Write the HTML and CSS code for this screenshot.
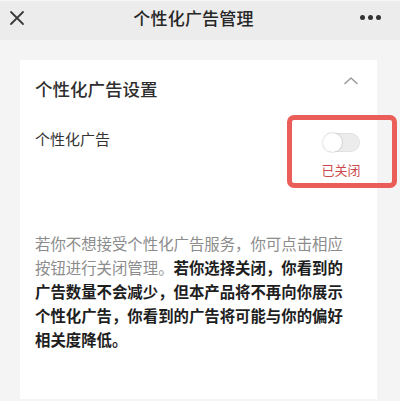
FILE: index.html
```html
<!DOCTYPE html>
<html lang="zh-CN">
<head>
<meta charset="utf-8">
<title>个性化广告管理</title>
<link rel="stylesheet" href="styles.css">
</head>
<body>
<header class="topbar">
  <svg class="close-icon" width="16" height="16" viewBox="0 0 16 16" aria-hidden="true">
    <path d="M2 2 L14 14 M14 2 L2 14" stroke="#3a3a3a" stroke-width="1.8" stroke-linecap="round" fill="none"/>
  </svg>
  <h1 class="topbar-title">个性化广告管理</h1>
  <div class="more-icon" aria-hidden="true"><span></span><span></span><span></span></div>
</header>
<main class="page">
  <section class="card">
    <div class="card-head">
      <h2 class="card-title">个性化广告设置</h2>
      <svg class="chevron" width="16" height="9" viewBox="0 0 16 9" aria-hidden="true">
        <path d="M2 7.5 L8 2 L14 7.5" stroke="#9a9a9a" stroke-width="1.5" fill="none" stroke-linecap="round" stroke-linejoin="round"/>
      </svg>
    </div>
    <div class="row">
      <span class="row-label">个性化广告</span>
      <div class="switch-group">
        <div class="switch"><span class="knob"></span></div>
        <span class="switch-state">已关闭</span>
        <span class="highlight"></span>
      </div>
    </div>
    <p class="desc"><span class="muted">若你不想接受个性化广告服务，你可点击相应</span><span class="muted">按钮进行关闭管理。</span><strong>若你选择关闭，你看到的</strong><strong>广告数量不会减少，但本产品将不再向你展示个性化广告，你看到的广告将可能与你的偏好相关度降低。</strong></p>
  </section>
</main>
</body>
</html>
```

FILE: styles.css
```css
html, body {
  margin: 0;
  padding: 0;
}
body {
  width: 400px;
  height: 401px;
  overflow: hidden;
  background: #f4f4f4;
  font-family: "Noto Sans CJK SC", "Noto Sans", sans-serif;
  color: #333;
}
.topbar {
  box-sizing: border-box;
  height: 40px;
  border-top: 1px solid #f7f7f7;
  background: #ececec;
  display: flex;
  align-items: center;
  padding: 0 19px 6px 9px;
}
.close-icon {
  flex: none;
}
.topbar-title {
  flex: 1;
  margin: 0;
  text-align: center;
  font-size: 17px;
  line-height: 24px;
  font-weight: 500;
  color: #262626;
  letter-spacing: 0.2px;
  padding-left: 2px;
}
.more-icon {
  display: flex;
  gap: 3px;
  width: 21px;
}
.more-icon span {
  width: 5px;
  height: 5px;
  border-radius: 50%;
  background: #333;
}
.page {
  padding: 20px 23px 0 20px;
}
.card {
  box-sizing: border-box;
  height: 339px;
  background: #fff;
  padding: 17px 17px 0 15px;
}
.card-head {
  display: flex;
  justify-content: space-between;
  align-items: flex-start;
}
.card-title {
  margin: 0;
  font-size: 17.5px;
  line-height: 24px;
  font-weight: 500;
  color: #2e2e2e;
}
.chevron {
  margin-top: -1px;
  margin-right: 1px;
}
.row {
  display: flex;
  justify-content: space-between;
  align-items: flex-start;
  margin-top: 28px;
}
.row-label {
  font-size: 15px;
  line-height: 20px;
  color: #333;
}
.switch-group {
  position: relative;
  display: flex;
  flex-direction: column;
  align-items: center;
  width: 40px;
  margin-top: 4px;
  margin-right: -1px;
}
.switch {
  box-sizing: border-box;
  width: 37px;
  height: 19px;
  border-radius: 10px;
  background: #ececec;
  border: 1px solid #e2e2e2;
  position: relative;
}
.knob {
  position: absolute;
  left: -1px;
  top: -1px;
  width: 19px;
  height: 19px;
  border-radius: 50%;
  background: #fff;
  box-shadow: 0 0 1px 1px rgba(0,0,0,0.10);
}
.switch-state {
  margin-top: 9px;
  font-size: 13px;
  line-height: 18px;
  color: #cc4a4c;
}
.highlight {
  position: absolute;
  left: -34px;
  top: -18px;
  width: 100px;
  height: 63px;
  border: 5px solid #ea5d58;
  border-radius: 7px;
}
.desc {
  margin: 52px 0 0;
  width: 312px;
  font-size: 15.4px;
  line-height: 24px;
}
.muted {
  color: #8c8c8c;
}
.desc strong {
  font-weight: 700;
  color: #1e1e1e;
}
```
